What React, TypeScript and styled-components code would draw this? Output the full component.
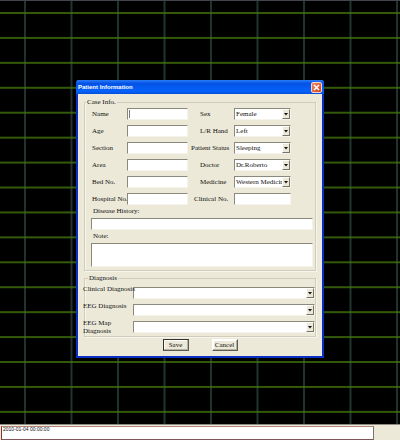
import React from "react";
import styled, { createGlobalStyle } from "styled-components";

const GlobalStyle = createGlobalStyle`
  * { box-sizing: border-box; }
  html, body { margin: 0; background: #000; }
  body, input, select, textarea, button {
    font-family: "Liberation Serif", "Times New Roman", serif;
    font-size: 7px;
    line-height: 8px;
    color: #111;
  }
`;

const Screen = styled.div`
  display: flex;
  flex-direction: column;
  min-height: 100vh;
`;

const Monitor = styled.main`
  position: relative;
  flex: 1;
  display: flex;
  align-items: center;
  justify-content: center;
  padding-top: 13px;
  background: #000;
  border-top: 1px solid #43464e;
  overflow: hidden;
`;

const Traces = styled.svg`
  position: absolute;
  inset: 0;
  width: 100%;
  height: 100%;
`;

const Dialog = styled.section`
  position: relative;
  width: 62%;
  min-width: 248px;
  background: #ece9d8;
  border: 2px solid #0a2fc4;
  border-top: 0;
  border-radius: 3px 3px 0 0;
`;

const TitleBar = styled.header`
  display: flex;
  align-items: center;
  justify-content: space-between;
  height: 14px;
  margin: 0 -2px;
  padding: 0 2px;
  border-radius: 3px 3px 0 0;
  background: linear-gradient(#2b7df5, #0452e6 25%, #0562fb 80%, #0450d8);
`;

const Title = styled.h1`
  margin: 0;
  font: bold 6px/8px "Liberation Sans", sans-serif;
  color: #fff;
`;

const CloseButton = styled.button`
  display: flex;
  width: 11px;
  height: 11px;
  padding: 1px;
  border: 1px solid #f3d5cf;
  border-radius: 2px;
  background: linear-gradient(135deg, #ec8a68, #d5401c);
`;

const Form = styled.form`
  padding: 4px 6px 5px;
`;

const Group = styled.fieldset`
  min-width: 0;
  margin: 0;
  padding: 2px 2px 3px 6px;
  border: 1px solid #d0cdbd;
  box-shadow: 1px 1px 0 #f8f6ec, inset 1px 0 0 #f8f6ec;
`;

const DiagnosisGroup = styled(Group)`
  margin-top: 3px;
  padding: 3px 0 0;
`;

const Legend = styled.legend<{ $inset: number }>`
  margin-left: ${(p) => p.$inset}px;
  padding: 0 1px;
`;

const Columns = styled.div`
  display: grid;
  grid-template-columns: 61fr 57fr;
  column-gap: 46px;
  padding: 0 22px 0 36px;
`;

const Column = styled.div`
  display: flex;
  flex-direction: column;
  gap: 5px;
`;

const Field = styled.div<{ $label: number }>`
  display: grid;
  grid-template-columns: ${(p) => p.$label}px 1fr;
  align-items: center;
  margin-left: -${(p) => p.$label}px;
`;

const Label = styled.label`
  white-space: nowrap;
`;

const TextBox = styled.input`
  grid-row: 1;
  width: 100%;
  min-width: 0;
  height: 12px;
  padding: 0 2px;
  border: 1px solid #f6f4ea;
  border-top-color: #8b897c;
  border-left-color: #8b897c;
  border-radius: 0;
  background: #fff;
  outline: 0;
`;

const FieldBox = styled(TextBox)`
  grid-column: 2;
`;

const Caret = styled.span`
  grid-area: 1 / 2;
  width: 1px;
  height: 8px;
  margin-left: 2px;
  background: #777;
  z-index: 1;
`;

const Combo = styled.div`
  display: grid;
  grid-template-columns: 1fr 8px;
  height: 12px;
  border: 1px solid #f6f4ea;
  border-top-color: #8b897c;
  border-left-color: #8b897c;
  background: #fff;
`;

const Choice = styled.select`
  grid-area: 1 / 1 / 2 / 3;
  width: 100%;
  min-width: 0;
  height: 10px;
  padding: 0 6px 0 1px;
  appearance: none;
  border: 0;
  border-radius: 0;
  background: transparent;
  outline: 0;
`;

const Arrow = styled.svg`
  grid-area: 1 / 2;
  width: 8px;
  height: 10px;
  pointer-events: none;
  background: #ece9d8;
  border: 1px solid #fff;
  border-right-color: #77756a;
  border-bottom-color: #77756a;
`;

const Block = styled.div`
  display: flex;
  flex-direction: column;
  gap: 3px;
  padding-top: 2px;

  label { margin-left: 2px; }
`;

const NoteBox = styled.textarea`
  display: block;
  width: 100%;
  height: 24px;
  padding: 1px 2px;
  resize: none;
  border: 1px solid #f6f4ea;
  border-top-color: #8b897c;
  border-left-color: #8b897c;
  border-radius: 0;
  background: #fff;
  outline: 0;
`;

const DiagnosisRow = styled.div`
  display: grid;
  grid-template-columns: 48px 1fr;
  align-items: start;
  min-height: 17px;

  label {
    z-index: 1;
    margin-left: -2px;
    white-space: pre;
  }

  ${Combo} { margin-top: 2px; }
`;

const Actions = styled.div`
  display: flex;
  justify-content: center;
  gap: 23px;
  padding-top: 2px;
`;

const PushButton = styled.button<{ $default?: boolean }>`
  width: 26px;
  height: 12px;
  padding: 0;
  border: 1px solid ${(p) => (p.$default ? "#33322e" : "#fff")};
  border-right-color: #5e5c53;
  border-bottom-color: #5e5c53;
  border-radius: 0;
  background: #ece9d8;
  box-shadow: inset -1px -1px 0 #b5b2a3, inset 1px 1px 0 #fff;
`;

const StatusBar = styled.footer`
  display: grid;
  grid-template-columns: 372fr 26fr;
  height: 16px;
  padding: 1px 0 0 1px;
  border-top: 1px solid #8d8b83;
  background: #ece9d8;
`;

const Timeline = styled.div`
  padding-left: 1px;
  border: 1px solid #777;
  border-left-color: #8c3030;
  border-top-color: #b3877b;
  border-bottom-color: #805555;
  background: #fff;
  font: 5px/5px "Liberation Sans", sans-serif;
`;

const textFields = ["Name", "Age", "Section", "Area", "Bed No.", "Hospital No."];
const choiceFields = [
  { label: "Sex", value: "Female", width: 34 },
  { label: "L/R Hand", value: "Left", width: 34 },
  { label: "Patient Status", value: "Sleeping", width: 43 },
  { label: "Doctor", value: "Dr.Roberto", width: 34 },
  { label: "Medicine", value: "Western Medicin", width: 34 },
];
const diagnoses = ["Clinical Diagnosis", "EEG Diagnosis", "EEG Map\nDiagnosis"];

function DropDown({ id, value = "" }: { id: string; value?: string }) {
  return (
    <Combo>
      <Choice id={id} defaultValue={value}>
        <option value={value}>{value}</option>
      </Choice>
      <Arrow viewBox="0 0 6 8" aria-hidden="true">
        <path d="M1 3h4L3 5.500z" fill="#111" />
      </Arrow>
    </Combo>
  );
}

function GridTraces() {
  return (
    <Traces aria-hidden="true">
      <defs>
        <pattern id="columns" x="24" width="46.5" height="25" patternUnits="userSpaceOnUse">
          <path d="M1 0V25" stroke="#2a443f" strokeWidth="1.500" />
        </pattern>
        <pattern id="rows" y="11" width="46.5" height="24.93" patternUnits="userSpaceOnUse">
          <path d="M0 1H47" stroke="#44780c" strokeWidth="1.500" />
        </pattern>
      </defs>
      <rect width="100%" height="100%" fill="url(#columns)" />
      <rect width="100%" height="100%" fill="url(#rows)" />
    </Traces>
  );
}

export default function App() {
  return (
    <Screen>
      <GlobalStyle />
      <Monitor>
        <GridTraces />
        <Dialog role="dialog" aria-labelledby="dialog-title">
          <TitleBar>
            <Title id="dialog-title">Patient Information</Title>
            <CloseButton type="button" aria-label="Close">
              <svg viewBox="0 0 7 7" width="7" height="7" aria-hidden="true">
                <path d="M1 1l5 5M6 1L1 6" stroke="#fff" strokeWidth="1.500" />
              </svg>
            </CloseButton>
          </TitleBar>
          <Form onSubmit={(e) => e.preventDefault()}>
            <Group>
              <Legend $inset={-5}>Case Info.</Legend>
              <Columns>
                <Column>
                  {textFields.map((name, i) => (
                    <Field key={name} $label={35}>
                      <Label htmlFor={name}>{name}</Label>
                      <FieldBox id={name} />
                      {i === 0 && <Caret />}
                    </Field>
                  ))}
                </Column>
                <Column>
                  {choiceFields.map((f) => (
                    <Field key={f.label} $label={f.width}>
                      <Label htmlFor={f.label}>{f.label}</Label>
                      <DropDown id={f.label} value={f.value} />
                    </Field>
                  ))}
                  <Field $label={40}>
                    <Label htmlFor="clinical-no">Clinical No.</Label>
                    <FieldBox id="clinical-no" />
                  </Field>
                </Column>
              </Columns>
              <Block>
                <Label htmlFor="history">Disease History:</Label>
                <TextBox id="history" />
              </Block>
              <Block>
                <Label htmlFor="note">Note:</Label>
                <NoteBox id="note" />
              </Block>
            </Group>
            <DiagnosisGroup>
              <Legend $inset={3}>Diagnosis</Legend>
              {diagnoses.map((name) => (
                <DiagnosisRow key={name}>
                  <label htmlFor={name.replace(/\s/g, "-")}>{name}</label>
                  <DropDown id={name.replace(/\s/g, "-")} />
                </DiagnosisRow>
              ))}
            </DiagnosisGroup>
            <Actions>
              <PushButton type="submit" $default>Save</PushButton>
              <PushButton type="button">Cancel</PushButton>
            </Actions>
          </Form>
        </Dialog>
      </Monitor>
      <StatusBar>
        <Timeline>2010-01-04 00:00:00</Timeline>
      </StatusBar>
    </Screen>
  );
}
